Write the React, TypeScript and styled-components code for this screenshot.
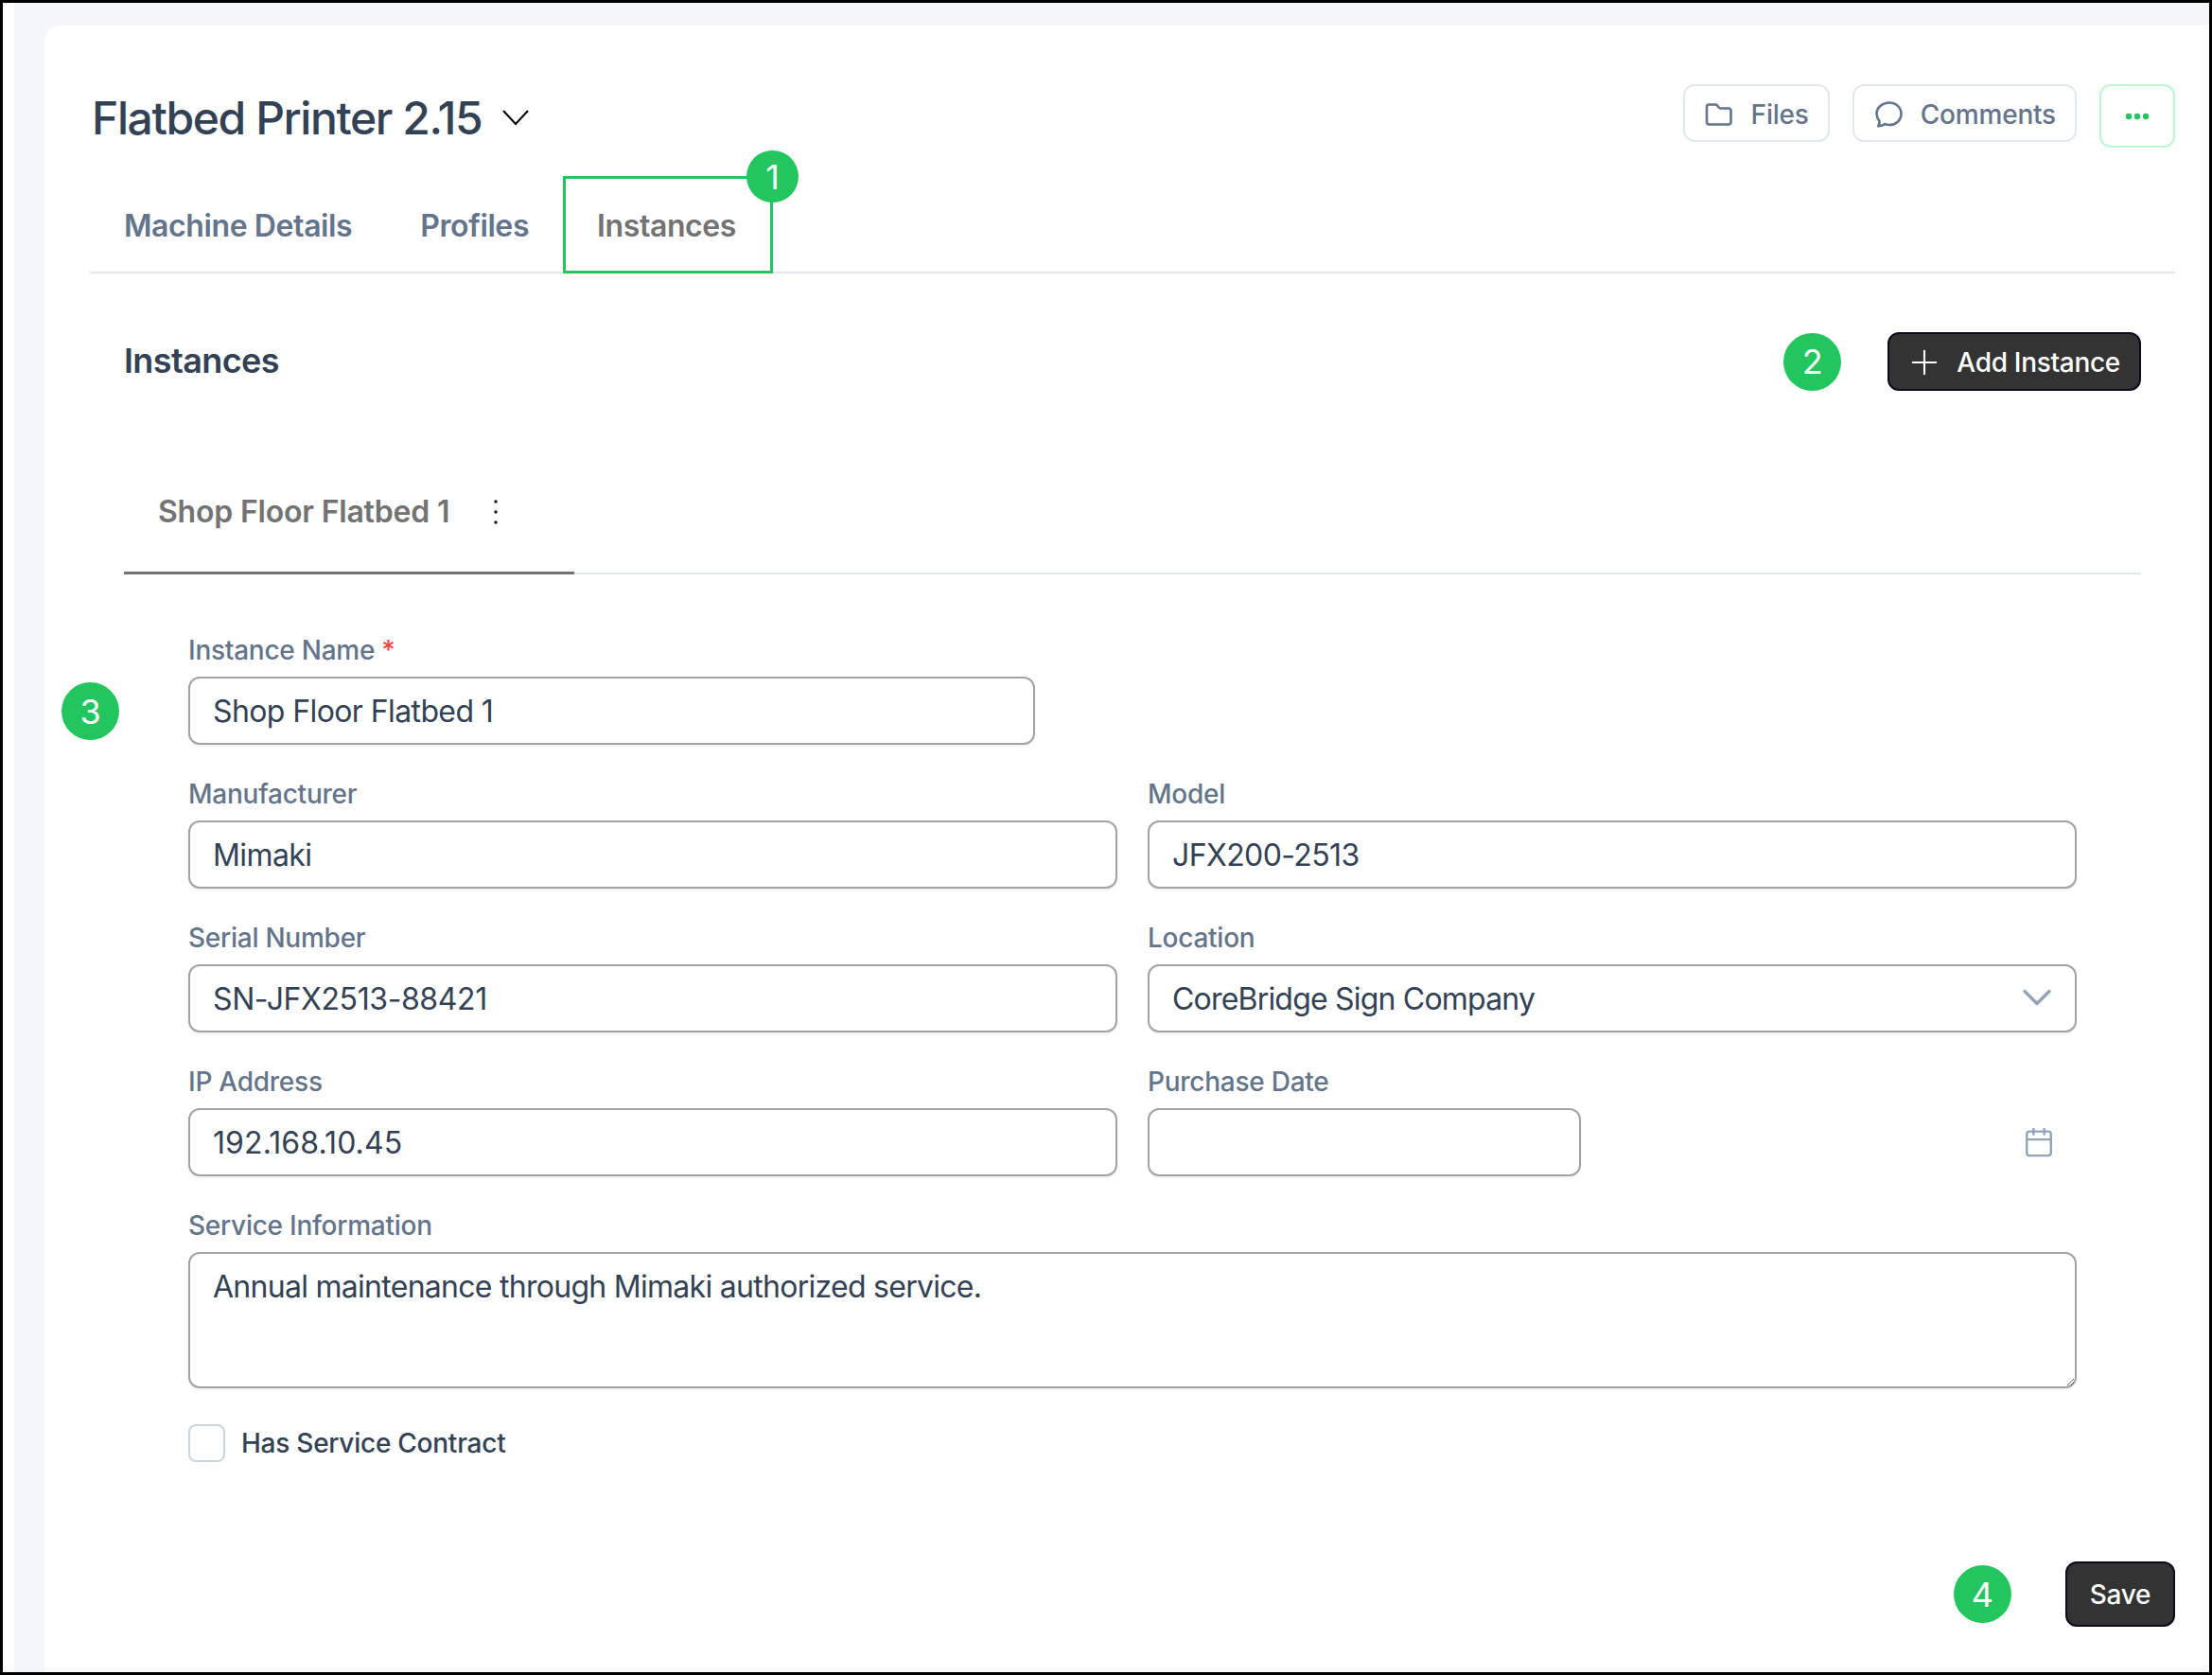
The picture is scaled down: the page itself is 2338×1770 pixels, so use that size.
import React from "react";
import styled, { createGlobalStyle } from "styled-components";
import { Calendar, ChevronDown, Plus } from "lucide-react";

const Global = createGlobalStyle`
  html, body { margin: 0; padding: 0; background: #fff; }
  * { box-sizing: border-box; }
  body { font-family: Inter, "Liberation Sans", sans-serif; }
`;

const Frame = styled.div`
  width: 2338px;
  height: 1770px;
  border: 3px solid #000;
  background: #fff;
  padding-left: 12px;
  overflow: hidden;
`;
const Backdrop = styled.div`
  height: 100%;
  background: #f5f6f8;
  padding: 24px 0 0 32px;
`;
const Card = styled.main`
  height: 100%;
  background: #fff;
  border-top-left-radius: 16px;
  padding: 62px 36px 0 48px;
`;
const Header = styled.header`
  display: flex;
  justify-content: space-between;
  align-items: flex-start;
  height: 67px;
`;
const TitleGroup = styled.div`
  display: flex;
  align-items: center;
  gap: 21px;
  margin: -1px 0 0 2px;
  height: 72px;
`;
const Title = styled.h1`
  margin: 0;
  font-size: 48px;
  font-weight: 550;
  letter-spacing: -1.4px;
  color: #334155;
`;
const Actions = styled.div`
  display: flex;
  align-items: flex-start;
  gap: 24px;
`;
const GhostButton = styled.button`
  display: flex;
  align-items: center;
  gap: 18px;
  height: 61px;
  padding: 2px 20px 0 20px;
  background: #fff;
  border: 2px solid #e2e8f0;
  border-radius: 12px;
  font: 500 28px Inter, sans-serif;
  letter-spacing: -0.2px;
  color: #64748b;
`;
const MoreButton = styled.button`
  display: flex;
  align-items: center;
  justify-content: center;
  width: 80px;
  height: 67px;
  background: #fff;
  border: 2px solid #bbf7d0;
  border-radius: 12px;
  padding: 0;
`;
const Tabs = styled.nav`
  display: flex;
  margin-top: 30px;
  height: 103px;
  border-bottom: 2px solid #e2e8f0;
`;
const Tab = styled.div<{ $marked?: boolean }>`
  position: relative;
  display: flex;
  align-items: center;
  height: 103px;
  padding: 1px ${(p) => (p.$marked ? 39 : 36)}px 0 36px;
  font-size: 32px;
  font-weight: 600;
  letter-spacing: -0.4px;
  color: ${(p) => (p.$marked ? "#737373" : "#64748b")};
  box-shadow: ${(p) => (p.$marked ? "inset 0 0 0 3px #22c55e" : "none")};
`;
const Badge = styled.span<{ $size?: number }>`
  display: flex;
  align-items: center;
  justify-content: center;
  flex: none;
  width: ${(p) => p.$size ?? 61}px;
  height: ${(p) => p.$size ?? 61}px;
  border-radius: 50%;
  background: #22c55e;
  color: #fff;
  font-size: 36px;
  font-weight: 400;
  letter-spacing: 0;
`;
const TabBadge = styled(Badge)`
  position: absolute;
  top: -27px;
  right: -27px;
`;
const FormBadge = styled(Badge)`
  position: absolute;
  left: -134px;
  top: 54px;
`;
const Section = styled.section`
  padding: 0 36px;
`;
const SectionHead = styled.div`
  display: flex;
  justify-content: space-between;
  align-items: center;
  margin-top: 62px;
  height: 62px;
`;
const SectionTitle = styled.h2`
  margin: -2px 0 0;
  font-size: 36px;
  font-weight: 600;
  letter-spacing: -0.6px;
  color: #334155;
`;
const HeadActions = styled.div<{ $gap: number }>`
  display: flex;
  align-items: center;
  gap: ${(p) => p.$gap}px;
`;
const DarkButton = styled.button`
  display: flex;
  align-items: center;
  justify-content: center;
  gap: 13px;
  height: 62px;
  padding: 2px 20px 0 16px;
  background: #333;
  border: 2px solid #0b0b1e;
  border-radius: 12px;
  color: #fff;
  font: 550 28px Inter, sans-serif;
  letter-spacing: -0.3px;
`;
const SaveButton = styled(DarkButton)`
  width: 116px;
  height: 69px;
  padding: 0;
`;
const InstanceTabs = styled.div`
  display: flex;
  margin-top: 62px;
  height: 132px;
  border-bottom: 2px solid #e2e8f0;
`;
const InstanceTab = styled.div`
  display: flex;
  align-items: center;
  gap: 46px;
  width: 476px;
  height: 132px;
  padding: 2px 0 0 36px;
  border-bottom: 3px solid #737373;
  font-size: 32px;
  font-weight: 600;
  letter-spacing: -0.2px;
  color: #737373;
`;
const Form = styled.form`
  display: grid;
  grid-template-columns: 982px 982px;
  column-gap: 32px;
  row-gap: 32px;
  padding: 60px 68px 0;
`;
const Field = styled.div<{ $full?: boolean }>`
  position: relative;
  grid-column: ${(p) => (p.$full ? "1 / -1" : "auto")};
`;
const Label = styled.label`
  display: block;
  height: 40px;
  margin-bottom: 8px;
  line-height: 40px;
  font-size: 28px;
  font-weight: 500;
  letter-spacing: -0.25px;
  color: #64748b;
`;
const Required = styled.span`
  color: #ef4444;
  margin-left: 7px;
`;
const Input = styled.input<{ $w?: number; $track?: number }>`
  display: block;
  width: ${(p) => (p.$w ? p.$w + "px" : "100%")};
  height: 72px;
  padding: 0 24px;
  background: #fff;
  border: 2px solid #a3a3a3;
  border-radius: 12px;
  box-shadow: 0 2px 3px rgba(0, 0, 0, 0.06);
  font: 400 32px Inter, sans-serif;
  letter-spacing: ${(p) => p.$track ?? -0.6}px;
  color: #334155;
  outline: none;
`;
const SelectBox = styled.div`
  position: relative;
  display: flex;
  align-items: center;
  height: 72px;
  padding: 0 24px;
  background: #fff;
  border: 2px solid #a3a3a3;
  border-radius: 12px;
  box-shadow: 0 2px 3px rgba(0, 0, 0, 0.06);
  font-size: 32px;
  letter-spacing: -0.8px;
  color: #334155;
`;
const SelectIcon = styled(ChevronDown)`
  position: absolute;
  right: 14px;
  top: 7px;
  color: #94a3b8;
`;
const DateIcon = styled(Calendar)`
  position: absolute;
  right: 23px;
  top: 67px;
  color: #94a3b8;
`;
const TextArea = styled.textarea`
  display: block;
  width: 100%;
  height: 144px;
  padding: 11px 24px;
  background: #fff;
  border: 2px solid #a3a3a3;
  border-radius: 12px;
  box-shadow: 0 2px 3px rgba(0, 0, 0, 0.06);
  font: 400 32px/48px Inter, sans-serif;
  letter-spacing: -0.72px;
  color: #334155;
  outline: none;
`;
const CheckRow = styled.div`
  grid-column: 1 / -1;
  display: flex;
  align-items: center;
  gap: 17px;
  margin-top: 6px;
  height: 40px;
  font-size: 28px;
  font-weight: 500;
  letter-spacing: -0.25px;
  color: #334155;
`;
const CheckBox = styled.span`
  width: 39px;
  height: 40px;
  background: #fff;
  border: 2px solid #cbd5e1;
  border-radius: 8px;
`;
const Footer = styled.footer`
  display: flex;
  justify-content: flex-end;
  margin-top: 105px;
`;

const FolderIcon = () => (
  <svg width="32" height="28" viewBox="0 0 32 28" fill="none" stroke="#64748b" strokeWidth="2.6" strokeLinejoin="round">
    <path d="M3 6a2.500 2.500 0 0 1 2.500-2.500h6.600c.8 0 1.500.4 2 1l1.600 2c.5.6 1.200 1 2 1h8.300a2.500 2.500 0 0 1 2.500 2.500v12a2.500 2.500 0 0 1-2.500 2.500h-20A2.500 2.500 0 0 1 3 22z" />
  </svg>
);
const BubbleIcon = () => (
  <svg width="32" height="30" viewBox="0 0 32 30" fill="none" stroke="#64748b" strokeWidth="2.6" strokeLinejoin="round">
    <path d="M17 2.500c7 0 12.500 5 12.500 11.800S24 26 17 26c-1.700 0-3.300-.3-4.800-.9-1.800 1.400-4.200 2.200-7 2.200.9-1.500 1.400-3.200 1.400-5C4.800 20 3.500 17.300 3.500 14.300 3.500 7.500 10 2.500 17 2.500z" />
  </svg>
);
const DotsIcon = () => (
  <svg width="26" height="8" viewBox="0 0 26 8" fill="#22c55e">
    <circle cx="4" cy="4" r="3.2" />
    <circle cx="13" cy="4" r="3.2" />
    <circle cx="22" cy="4" r="3.2" />
  </svg>
);
const KebabIcon = () => (
  <svg width="6" height="28" viewBox="0 0 6 28" fill="#222">
    <circle cx="3" cy="3" r="1.800" />
    <circle cx="3" cy="14" r="1.800" />
    <circle cx="3" cy="25" r="1.800" />
  </svg>
);
const TitleChevron = () => (
  <svg width="30" height="18" viewBox="0 0 30 18" fill="none" stroke="#000" strokeWidth="2">
    <path d="M2 2l13 14L28 2" />
  </svg>
);

export default function App() {
  return (
    <>
      <Global />
      <Frame>
        <Backdrop>
          <Card>
            <Header>
              <TitleGroup>
                <Title>Flatbed Printer 2.15</Title>
                <TitleChevron />
              </TitleGroup>
              <Actions>
                <GhostButton>
                  <FolderIcon />
                  Files
                </GhostButton>
                <GhostButton>
                  <BubbleIcon />
                  Comments
                </GhostButton>
                <MoreButton aria-label="More">
                  <DotsIcon />
                </MoreButton>
              </Actions>
            </Header>
            <Tabs>
              <Tab>Machine Details</Tab>
              <Tab>Profiles</Tab>
              <Tab $marked>
                Instances
                <TabBadge $size={55}>1</TabBadge>
              </Tab>
            </Tabs>
            <Section>
              <SectionHead>
                <SectionTitle>Instances</SectionTitle>
                <HeadActions $gap={49}>
                  <Badge>2</Badge>
                  <DarkButton>
                    <Plus size={42} strokeWidth={1.2} />
                    Add Instance
                  </DarkButton>
                </HeadActions>
              </SectionHead>
              <InstanceTabs>
                <InstanceTab>
                  Shop Floor Flatbed 1
                  <KebabIcon />
                </InstanceTab>
              </InstanceTabs>
              <Form>
                <Field $full>
                  <Label>
                    Instance Name<Required>*</Required>
                  </Label>
                  <Input $w={895} defaultValue="Shop Floor Flatbed 1" />
                  <FormBadge>3</FormBadge>
                </Field>
                <Field>
                  <Label>Manufacturer</Label>
                  <Input defaultValue="Mimaki" />
                </Field>
                <Field>
                  <Label>Model</Label>
                  <Input defaultValue="JFX200-2513" />
                </Field>
                <Field>
                  <Label>Serial Number</Label>
                  <Input $track={-0.4} defaultValue="SN-JFX2513-88421" />
                </Field>
                <Field>
                  <Label>Location</Label>
                  <SelectBox>
                    CoreBridge Sign Company
                    <SelectIcon size={52} strokeWidth={1.6} />
                  </SelectBox>
                </Field>
                <Field>
                  <Label>IP Address</Label>
                  <Input $track={0.1} defaultValue="192.168.10.45" />
                </Field>
                <Field>
                  <Label>Purchase Date</Label>
                  <Input $w={458} />
                  <DateIcon size={34} strokeWidth={1.7} />
                </Field>
                <Field $full>
                  <Label>Service Information</Label>
                  <TextArea defaultValue="Annual maintenance through Mimaki authorized service." />
                </Field>
                <CheckRow>
                  <CheckBox />
                  Has Service Contract
                </CheckRow>
              </Form>
            </Section>
            <Footer>
              <HeadActions $gap={57}>
                <Badge>4</Badge>
                <SaveButton>Save</SaveButton>
              </HeadActions>
            </Footer>
          </Card>
        </Backdrop>
      </Frame>
    </>
  );
}
